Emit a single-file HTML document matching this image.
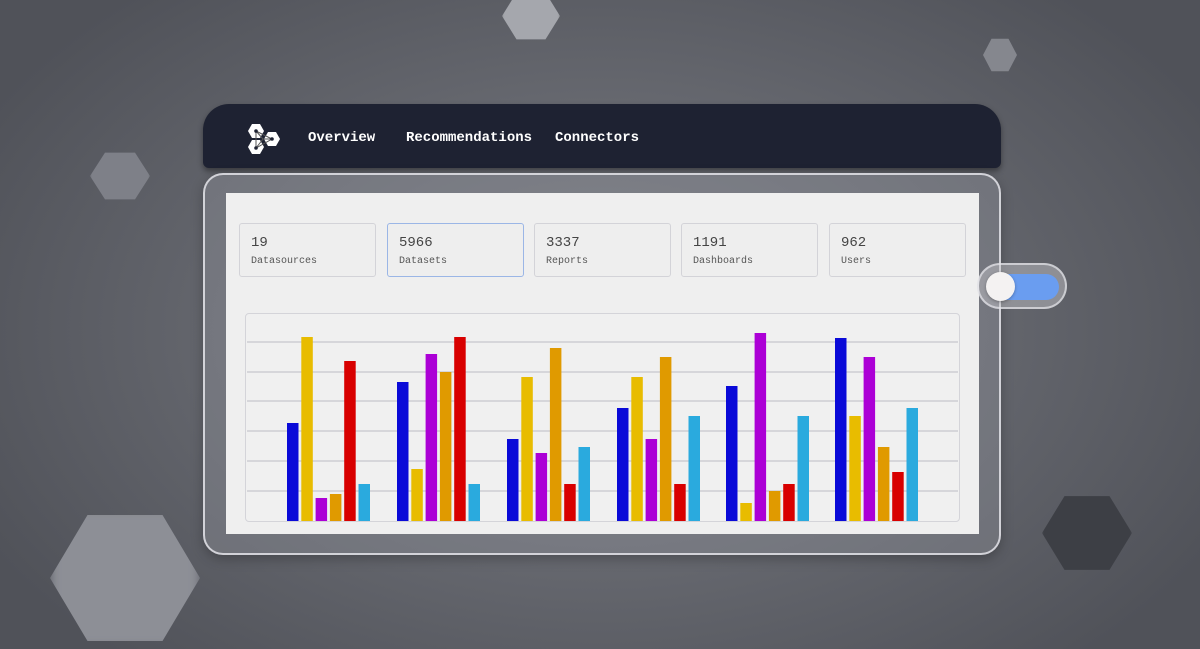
<!DOCTYPE html>
<html><head><style>
*{margin:0;padding:0;box-sizing:border-box}
body{width:1200px;height:649px;overflow:hidden;position:relative;font-family:"Liberation Mono",monospace;
background:radial-gradient(ellipse 700px 450px at 600px 330px,#7a7c84 0%,#66686f 50%,#505259 100%);}
.hex{position:absolute;clip-path:polygon(25% 5%,75% 5%,100% 50%,75% 95%,25% 95%,0 50%)}
.nav{position:absolute;left:203px;top:104px;width:798px;height:64px;background:#1e2232;border-radius:26px 26px 6px 6px;box-shadow:0 3px 6px rgba(0,0,0,.4)}
.nav span{position:absolute;top:26px;color:#fff;font-weight:bold;font-size:14px}
.frame{position:absolute;left:203px;top:173px;width:798px;height:382px;border-radius:20px;border:2px solid rgba(235,235,240,.8);background:rgba(150,152,160,.35);box-shadow:0 4px 12px rgba(0,0,0,.25)}
.inner{position:absolute;left:226px;top:193px;width:753px;height:341px;background:#efefef}
.card{position:absolute;top:223px;width:137px;height:54px;border:1.5px solid #d3d3d8;border-radius:3px;background:#eeeeee;color:#444}
.card b{position:absolute;left:11px;top:11px;font-weight:normal;font-size:14px}
.card i{position:absolute;left:11px;top:32px;font-style:normal;font-size:10px;color:#555}
.chart{position:absolute;left:245px;top:313px;width:715px;height:209px;border:1.5px solid #d4d4d9;border-radius:4px;background:#f0f0f0}
.tog{position:absolute;left:977px;top:263px;width:90px;height:46px;border-radius:23px;background:rgba(200,200,205,.45);border:2px solid rgba(230,230,235,.7)}
.tog .t{position:absolute;left:8px;top:9px;width:72px;height:26px;border-radius:13px;background:#6a9df0}
.tog .k{position:absolute;left:7px;top:7px;width:29px;height:29px;border-radius:50%;background:#f4f2f2;box-shadow:0 1px 3px rgba(0,0,0,.3)}
</style></head><body>
<div class="hex" style="left:502px;top:-10px;width:58px;height:52px;background:#a5a7ad;filter:blur(1px)"></div>
<div class="hex" style="left:983px;top:37px;width:34px;height:36px;background:#85878e"></div>
<div class="hex" style="left:90px;top:150px;width:60px;height:52px;background:#7e8088;filter:blur(1px)"></div>
<div class="hex" style="left:50px;top:508px;width:150px;height:140px;background:#8d8f96;filter:blur(5px)"></div>
<div class="hex" style="left:1042px;top:492px;width:90px;height:82px;background:#3d3f45;filter:blur(1px)"></div>
<div class="nav">
<svg style="position:absolute;left:45px;top:19px" width="34" height="34" viewBox="0 0 34 34">
<g fill="#fff"><polygon points="4,1 12,1 16,8 12,15 4,15 0,8"/><polygon points="20,9 28,9 32,16 28,23 20,23 16,16"/><polygon points="4,17 12,17 16,24 12,31 4,31 0,24"/></g>
<g stroke="#555" stroke-width="1" fill="none"><path d="M8,8 L24,16 L8,25 Z"/><path d="M8,8 L15,16 L8,25 M15,16 L24,16"/></g>
<g fill="#1e2232"><circle cx="8" cy="8" r="1.8"/><circle cx="24" cy="16" r="1.8"/><circle cx="8" cy="25" r="1.8"/></g>
</svg>
<span style="left:105px">Overview</span><span style="left:203px">Recommendations</span><span style="left:352px">Connectors</span>
</div>
<div class="frame"></div>
<div class="inner"></div>
<div class="card" style="left:239px"><b>19</b><i>Datasources</i></div>
<div class="card" style="left:387px;border-color:#9bb6e6"><b>5966</b><i>Datasets</i></div>
<div class="card" style="left:534px"><b>3337</b><i>Reports</i></div>
<div class="card" style="left:681px"><b>1191</b><i>Dashboards</i></div>
<div class="card" style="left:829px"><b>962</b><i>Users</i></div>
<div class="chart"></div>
<svg style="position:absolute;left:0;top:0" width="1200" height="649">
<g stroke="#d6d6da" stroke-width="2"><line x1="247" x2="958" y1="342" y2="342"/><line x1="247" x2="958" y1="372" y2="372"/><line x1="247" x2="958" y1="401" y2="401"/><line x1="247" x2="958" y1="431" y2="431"/><line x1="247" x2="958" y1="461" y2="461"/><line x1="247" x2="958" y1="491" y2="491"/></g>
<g id="bars"></g>
</svg>
<div class="tog"><div class="t"></div><div class="k"></div></div>
<script>
var cols=["#0a0ad8","#e8bc00","#ac00d6","#e09a00","#d80000","#2aaade"];
var tops=[[423,337,498,494,361,484],[382,469,354,372,337,484],[439,377,453,348,484,447],[408,377,439,357,484,416],[386,503,333,491,484,416],[338,416,357,447,472,408]];
var gx=[287,397,507,617,726,835],s="";
for(var g=0;g<6;g++)for(var b=0;b<6;b++){var x=gx[g]+b*14.3,y=tops[g][b];s+='<rect x="'+x+'" y="'+y+'" width="11.5" height="'+(521-y)+'" fill="'+cols[b]+'"/>';}
document.getElementById("bars").innerHTML=s;
</script>
</body></html>
